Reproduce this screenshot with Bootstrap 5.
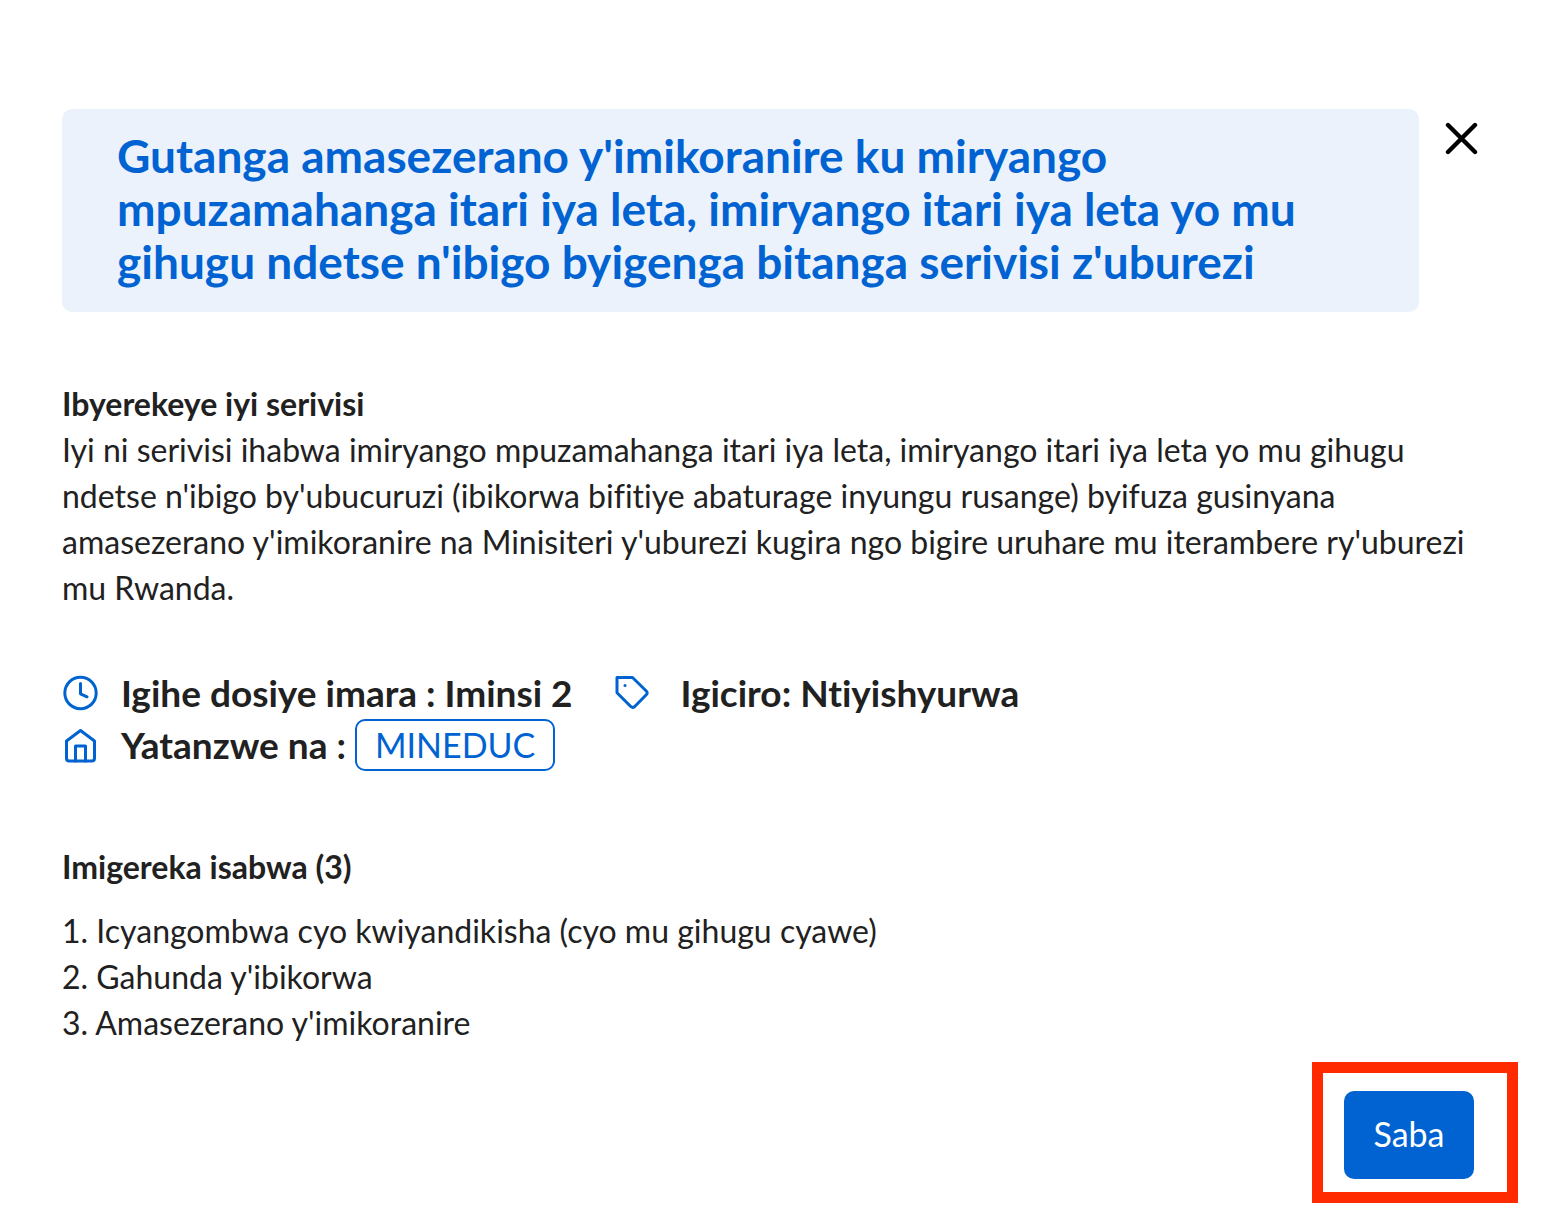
<!DOCTYPE html>
<html lang="rw">
<head>
<meta charset="utf-8">
<meta name="viewport" content="width=device-width, initial-scale=1">
<title>Serivisi</title>
<link href="https://cdn.jsdelivr.net/npm/bootstrap@5.3.0/dist/css/bootstrap.min.css" rel="stylesheet">
<style>
body{font-family:Lato,"Open Sans",sans-serif;font-size:32px;line-height:46px;color:#212121;background:#fff;font-variant-ligatures:none}
.service{padding:109px 62px 0}
.service-head{gap:26px;margin-bottom:69px}
.service-title{background:#ebf2fc;border-radius:10px;padding:20px 55px 24px;color:#0063d1;font-size:46px;line-height:53px;font-weight:700}
.close-btn{margin:13px 2px 0 0;color:#000;line-height:0}
.sub{font-size:32px;line-height:46px;font-weight:700}
.meta{font-size:37px;line-height:52px;font-weight:700;margin:56px 0 73px}
.meta svg{color:#0063d1;flex:none}
.meta-item{gap:23px}
.meta-row{column-gap:40px}
.meta-price{gap:32px}
.org{font-size:34px;line-height:48px;font-weight:400;color:#0063d1;border:2px solid #0063d1;border-radius:10px;padding:0 18px;text-decoration:none;margin-left:9px}
.docs{margin:18px 0 0}
.actions{padding:16px 24px 20px}
.frame{border:11px solid #ff2a00;padding:18px 33px 13px 21px}
.apply{width:130px;height:88px;padding:0 0 4px;border-radius:10px;background:#0063d1;color:#fff;font-size:34px}
.apply:hover{background:#0055b5;color:#fff}
</style>
<script src="https://cdn.jsdelivr.net/npm/bootstrap@5.3.0/dist/js/bootstrap.bundle.min.js" defer></script>
</head>
<body>
<main class="service">
  <header class="service-head d-flex align-items-start">
    <h1 class="service-title flex-grow-1 mb-0">Gutanga amasezerano y'imikoranire ku miryango mpuzamahanga itari iya leta, imiryango itari iya leta yo mu gihugu ndetse n'ibigo byigenga bitanga serivisi z'uburezi</h1>
    <button type="button" class="close-btn border-0 bg-transparent p-0" aria-label="Funga">
      <svg width="33" height="33" viewBox="0 0 33 33" fill="none" stroke="currentColor" stroke-width="4.400" stroke-linecap="round"><path d="M3 3l27 27M30 3L3 30"/></svg>
    </button>
  </header>
  <section>
    <h2 class="sub mb-0">Ibyerekeye iyi serivisi</h2>
    <p class="mb-0">Iyi ni serivisi ihabwa imiryango mpuzamahanga itari iya leta, imiryango itari iya leta yo mu gihugu ndetse n'ibigo by'ubucuruzi (ibikorwa bifitiye abaturage inyungu rusange) byifuza gusinyana amasezerano y'imikoranire na Minisiteri y'uburezi kugira ngo bigire uruhare mu iterambere ry'uburezi mu Rwanda.</p>
  </section>
  <section class="meta">
    <div class="meta-row d-flex flex-wrap">
      <div class="meta-item d-flex align-items-center">
        <svg width="36" height="36" viewBox="0 0 36 36" fill="none" stroke="currentColor" stroke-width="3" stroke-linecap="round" stroke-linejoin="round"><circle cx="18.500" cy="18" r="15.700"/><path d="M18.500 8.500v10.300l6.500 3"/></svg>
        <span>Igihe dosiye imara : Iminsi 2</span>
      </div>
      <div class="meta-item meta-price d-flex align-items-center">
        <svg width="36" height="36" viewBox="0 0 36 36" fill="none" stroke="currentColor" stroke-width="3" stroke-linecap="round" stroke-linejoin="round"><path d="M4 2.500h15.500L33.500 16.300q1.300 1.700 0 3.200L21.500 31.700q-1.800 1.400-3.500 0L4 17.700z"/><path d="M12 10.500h.01"/></svg>
        <span>Igiciro: Ntiyishyurwa</span>
      </div>
    </div>
    <div class="meta-item d-flex align-items-center">
      <svg width="36" height="36" viewBox="0 0 36 36" fill="none" stroke="currentColor" stroke-width="3" stroke-linecap="round" stroke-linejoin="round"><path d="M4.500 14L18.500 3.500 32.500 14v17.200q0 2.800-2.800 2.800H7.300q-2.800 0-2.800-2.800z"/><path d="M13.500 34V19h10v15"/></svg>
      <span class="d-flex">Yatanzwe na : <a href="#" class="org">MINEDUC</a></span>
    </div>
  </section>
  <section>
    <h2 class="sub mb-0">Imigereka isabwa (3)</h2>
    <ol class="docs list-unstyled">
      <li>1. Icyangombwa cyo kwiyandikisha (cyo mu gihugu cyawe)</li>
      <li>2. Gahunda y'ibikorwa</li>
      <li>3. Amasezerano y'imikoranire</li>
    </ol>
  </section>
</main>
<footer class="actions d-flex justify-content-end">
  <div class="frame"><button type="button" class="btn apply d-block">Saba</button></div>
</footer>
</body>
</html>
